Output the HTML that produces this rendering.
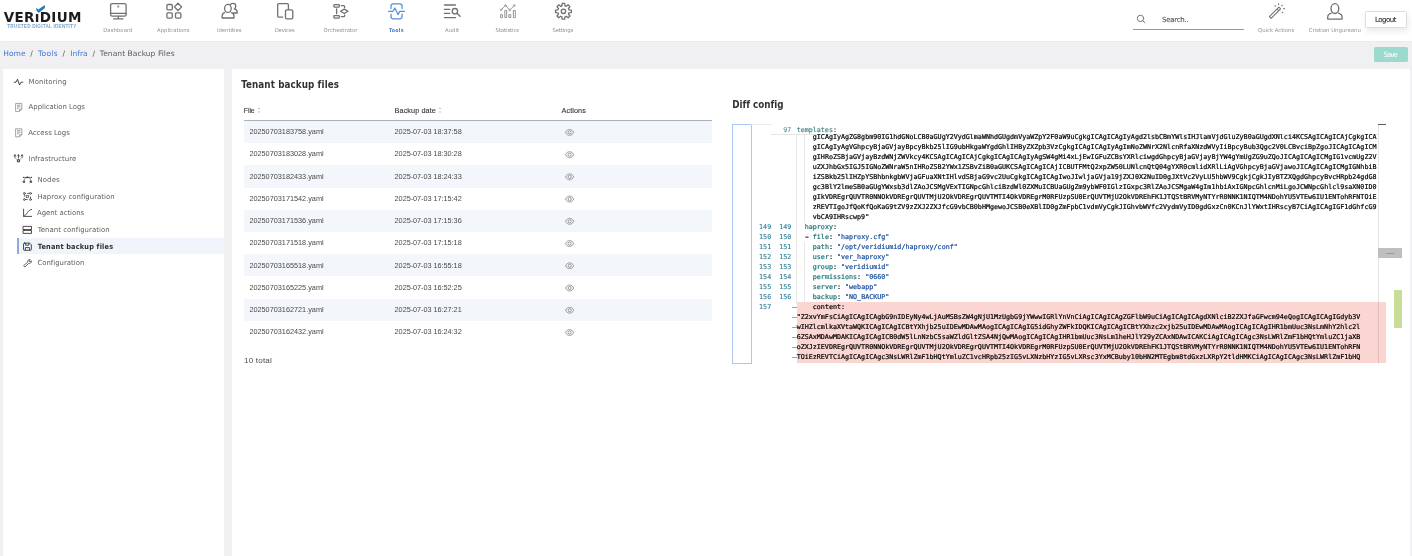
<!DOCTYPE html><html lang="en"><head><meta charset="utf-8"><title>Tenant Backup Files</title><style>
html,body{margin:0;padding:0}
body{width:1412px;height:556px;overflow:hidden;background:#f0f0f2;position:relative;font-family:"DejaVu Sans","Liberation Sans",sans-serif}
#app{position:absolute;left:0;top:0;width:1412px;height:556px;will-change:transform;overflow:hidden}
.t{position:absolute;white-space:pre}
.b{position:absolute}
#hdr{position:absolute;left:0;top:0;width:1412px;height:40.8px;background:#fff;box-shadow:0 0 1.5px rgba(0,0,0,.08)}
.panel{position:absolute;background:#fff}
.row{position:absolute;left:244px;width:467.9px;height:22.2px;background:#f3f7fb}
.m{font:6.69px/10px "DejaVu Sans Mono","Liberation Mono",monospace;white-space:pre;position:absolute;color:#000;-webkit-text-stroke:.2px currentColor}
.ln{font:6.69px/10px "DejaVu Sans Mono","Liberation Mono",monospace;white-space:pre;position:absolute;color:#237893;text-align:right;width:20px;-webkit-text-stroke:.08px currentColor}
.k{color:#1a7474}.s{color:#174c9c}.d{display:inline-block;transform:scaleX(1.7)}
svg{position:absolute;left:0;top:0;overflow:visible}
</style></head><body><div id="app">
<div id="hdr"></div>
<header>
<div class="t" style="left:3.70px;top:3.00px;font:bold 13.5px/28px 'DejaVu Sans', 'Liberation Sans', sans-serif;color:#1b1b20;letter-spacing:0.339px;">VERıDIUM</div>
<div class="t" style="left:7.20px;top:21.50px;font:bold 4.7px/10px 'Liberation Sans', sans-serif;color:#7da2cf;letter-spacing:0.203px;">TRUSTED DIGITAL IDENTITY</div>
<div class="t" style="left:103.20px;top:25.00px;font:normal 5.3px/10px 'DejaVu Sans', 'Liberation Sans', sans-serif;color:#8f8f8f;letter-spacing:0.069px;">Dashboard</div>
<div class="t" style="left:157.10px;top:25.00px;font:normal 5.3px/10px 'DejaVu Sans', 'Liberation Sans', sans-serif;color:#8f8f8f;letter-spacing:-0.005px;">Applications</div>
<div class="t" style="left:216.90px;top:25.00px;font:normal 5.3px/10px 'DejaVu Sans', 'Liberation Sans', sans-serif;color:#8f8f8f;letter-spacing:-0.006px;">Identities</div>
<div class="t" style="left:274.70px;top:25.00px;font:normal 5.3px/10px 'DejaVu Sans', 'Liberation Sans', sans-serif;color:#8f8f8f;letter-spacing:-0.146px;">Devices</div>
<div class="t" style="left:323.60px;top:25.00px;font:normal 5.3px/10px 'DejaVu Sans', 'Liberation Sans', sans-serif;color:#8f8f8f;letter-spacing:0.035px;">Orchestrator</div>
<div class="t" style="left:388.90px;top:25.00px;font:bold 5.3px/10px 'DejaVu Sans Condensed', 'Liberation Sans', sans-serif;color:#4a7bd0;letter-spacing:0.280px;">Tools</div>
<div class="t" style="left:445.00px;top:25.00px;font:normal 5.3px/10px 'DejaVu Sans', 'Liberation Sans', sans-serif;color:#8f8f8f;letter-spacing:0.023px;">Audit</div>
<div class="t" style="left:495.60px;top:25.00px;font:normal 5.3px/10px 'DejaVu Sans', 'Liberation Sans', sans-serif;color:#8f8f8f;letter-spacing:-0.080px;">Statistics</div>
<div class="t" style="left:552.50px;top:25.00px;font:normal 5.3px/10px 'DejaVu Sans', 'Liberation Sans', sans-serif;color:#8f8f8f;letter-spacing:-0.133px;">Settings</div>
<div class="t" style="left:1162.10px;top:13.00px;font:normal 7.0px/14px 'DejaVu Sans', 'Liberation Sans', sans-serif;color:#555;letter-spacing:-0.271px;-webkit-text-stroke:.12px #555;">Search..</div>
<div class="b" style="left:1133px;top:28.9px;width:111px;height:.9px;background:#9a9a9a"></div>
<div class="t" style="left:1258.00px;top:25.00px;font:normal 5.3px/10px 'DejaVu Sans', 'Liberation Sans', sans-serif;color:#8f8f8f;letter-spacing:0.015px;">Quick Actions</div>
<div class="t" style="left:1308.80px;top:25.00px;font:normal 5.3px/10px 'DejaVu Sans', 'Liberation Sans', sans-serif;color:#8f8f8f;letter-spacing:0.048px;">Cristian Ungureanu</div>
<div class="b" style="left:1365.3px;top:11.2px;width:39.9px;height:14.4px;border:.7px solid #dedede;border-radius:1.6px;background:#fff;box-shadow:1px 3px 6px rgba(0,0,0,.09)"></div>
<div class="t" style="left:1375.10px;top:13.00px;font:normal 7.0px/14px 'DejaVu Sans', 'Liberation Sans', sans-serif;color:#2e2e2e;letter-spacing:-0.554px;-webkit-text-stroke:.1px #2e2e2e;">Logout</div>
</header>
<nav aria-label="breadcrumb">
<div class="t" style="left:3.30px;top:45.50px;font:normal 7.55px/16px 'DejaVu Sans', 'Liberation Sans', sans-serif;color:#4175d9;letter-spacing:0.001px;">Home</div>
<div class="t" style="left:30.30px;top:45.50px;font:normal 7.55px/16px 'DejaVu Sans', 'Liberation Sans', sans-serif;color:#555;letter-spacing:0.000px;">/</div>
<div class="t" style="left:37.90px;top:45.50px;font:normal 7.55px/16px 'DejaVu Sans', 'Liberation Sans', sans-serif;color:#4175d9;letter-spacing:0.302px;">Tools</div>
<div class="t" style="left:62.50px;top:45.50px;font:normal 7.55px/16px 'DejaVu Sans', 'Liberation Sans', sans-serif;color:#555;letter-spacing:0.000px;">/</div>
<div class="t" style="left:70.20px;top:45.50px;font:normal 7.55px/16px 'DejaVu Sans', 'Liberation Sans', sans-serif;color:#4175d9;letter-spacing:0.023px;">Infra</div>
<div class="t" style="left:92.50px;top:45.50px;font:normal 7.55px/16px 'DejaVu Sans', 'Liberation Sans', sans-serif;color:#555;letter-spacing:0.000px;">/</div>
<div class="t" style="left:99.80px;top:45.50px;font:normal 7.55px/16px 'DejaVu Sans', 'Liberation Sans', sans-serif;color:#5a5a5a;letter-spacing:0.036px;">Tenant Backup Files</div>
<div class="b" style="left:1373.9px;top:47.2px;width:34.2px;height:14.5px;background:#9cdad0;border-radius:1.6px"></div>
<div class="t" style="left:1383.50px;top:47.50px;font:normal 7.2px/14px 'DejaVu Sans', 'Liberation Sans', sans-serif;color:#fff;letter-spacing:-1.152px;">Save</div>
</nav>
<aside>
<div class="panel" style="left:3px;top:68.6px;width:220.8px;height:490px"></div>
<div class="b" style="left:17px;top:237.7px;width:206.8px;height:16.4px;background:#f0f5fb"></div>
<div class="b" style="left:17px;top:237.7px;width:1.9px;height:16.4px;background:#8eabde"></div>
<div class="t" style="left:28.60px;top:75.00px;font:normal 6.95px/14px 'DejaVu Sans', 'Liberation Sans', sans-serif;color:#5e5e5e;letter-spacing:0.099px;">Monitoring</div>
<div class="t" style="left:28.60px;top:100.00px;font:normal 6.95px/14px 'DejaVu Sans', 'Liberation Sans', sans-serif;color:#5e5e5e;letter-spacing:-0.039px;">Application Logs</div>
<div class="t" style="left:28.20px;top:126.00px;font:normal 6.95px/14px 'DejaVu Sans', 'Liberation Sans', sans-serif;color:#5e5e5e;letter-spacing:-0.037px;">Access Logs</div>
<div class="t" style="left:28.60px;top:152.00px;font:normal 6.95px/14px 'DejaVu Sans', 'Liberation Sans', sans-serif;color:#5e5e5e;letter-spacing:0.009px;">Infrastructure</div>
<div class="t" style="left:37.40px;top:173.00px;font:normal 6.95px/14px 'DejaVu Sans', 'Liberation Sans', sans-serif;color:#5e5e5e;letter-spacing:0.141px;">Nodes</div>
<div class="t" style="left:37.40px;top:190.00px;font:normal 6.95px/14px 'DejaVu Sans', 'Liberation Sans', sans-serif;color:#5e5e5e;letter-spacing:0.008px;">Haproxy configuration</div>
<div class="t" style="left:37.00px;top:206.00px;font:normal 6.95px/14px 'DejaVu Sans', 'Liberation Sans', sans-serif;color:#5e5e5e;letter-spacing:-0.052px;">Agent actions</div>
<div class="t" style="left:37.70px;top:223.00px;font:normal 6.95px/14px 'DejaVu Sans', 'Liberation Sans', sans-serif;color:#5e5e5e;letter-spacing:0.030px;">Tenant configuration</div>
<div class="t" style="left:37.70px;top:239.50px;font:bold 7.25px/14px 'DejaVu Sans Condensed', 'Liberation Sans', sans-serif;color:#303030;letter-spacing:0.220px;">Tenant backup files</div>
<div class="t" style="left:37.40px;top:256.00px;font:normal 6.95px/14px 'DejaVu Sans', 'Liberation Sans', sans-serif;color:#5e5e5e;letter-spacing:-0.005px;">Configuration</div>
</aside>
<main><section>
<div class="panel" style="left:231.7px;top:68.6px;width:1178.7px;height:490px"></div>
<div class="t" style="left:241.20px;top:74.50px;font:bold 9.75px/20px 'DejaVu Sans Condensed', 'Liberation Sans', sans-serif;color:#333;letter-spacing:0.095px;">Tenant backup files</div>
<div class="t" style="left:243.80px;top:103.50px;font:normal 6.9px/14px 'Liberation Sans', sans-serif;color:#333;letter-spacing:-0.070px;-webkit-text-stroke:.1px #333;">File</div>
<div class="t" style="left:394.60px;top:103.50px;font:normal 7.3px/14px 'Liberation Sans', sans-serif;color:#333;letter-spacing:0.062px;-webkit-text-stroke:.1px #333;">Backup date</div>
<div class="t" style="left:561.60px;top:103.50px;font:normal 7.3px/14px 'Liberation Sans', sans-serif;color:#333;letter-spacing:0.044px;-webkit-text-stroke:.1px #333;">Actions</div>
<div class="b" style="left:244px;top:120px;width:467.9px;height:1px;background:#a9b0bb"></div>
<div class="row" style="top:121.00px"></div>
<div class="t" style="left:249.40px;top:124.50px;font:normal 7.3px/14px 'Liberation Sans', sans-serif;color:#4a4a4a;letter-spacing:-0.003px;">20250703183758.yaml</div>
<div class="t" style="left:394.60px;top:124.50px;font:normal 7.3px/14px 'Liberation Sans', sans-serif;color:#4a4a4a;letter-spacing:-0.037px;">2025-07-03 18:37:58</div>
<div class="t" style="left:249.40px;top:146.50px;font:normal 7.3px/14px 'Liberation Sans', sans-serif;color:#4a4a4a;letter-spacing:-0.003px;">20250703183028.yaml</div>
<div class="t" style="left:394.60px;top:146.50px;font:normal 7.3px/14px 'Liberation Sans', sans-serif;color:#4a4a4a;letter-spacing:-0.037px;">2025-07-03 18:30:28</div>
<div class="row" style="top:165.40px"></div>
<div class="t" style="left:249.40px;top:169.50px;font:normal 7.3px/14px 'Liberation Sans', sans-serif;color:#4a4a4a;letter-spacing:-0.003px;">20250703182433.yaml</div>
<div class="t" style="left:394.60px;top:169.50px;font:normal 7.3px/14px 'Liberation Sans', sans-serif;color:#4a4a4a;letter-spacing:-0.037px;">2025-07-03 18:24:33</div>
<div class="t" style="left:249.40px;top:191.50px;font:normal 7.3px/14px 'Liberation Sans', sans-serif;color:#4a4a4a;letter-spacing:-0.003px;">20250703171542.yaml</div>
<div class="t" style="left:394.60px;top:191.50px;font:normal 7.3px/14px 'Liberation Sans', sans-serif;color:#4a4a4a;letter-spacing:-0.037px;">2025-07-03 17:15:42</div>
<div class="row" style="top:209.80px"></div>
<div class="t" style="left:249.40px;top:213.50px;font:normal 7.3px/14px 'Liberation Sans', sans-serif;color:#4a4a4a;letter-spacing:-0.003px;">20250703171536.yaml</div>
<div class="t" style="left:394.60px;top:213.50px;font:normal 7.3px/14px 'Liberation Sans', sans-serif;color:#4a4a4a;letter-spacing:-0.037px;">2025-07-03 17:15:36</div>
<div class="t" style="left:249.40px;top:235.50px;font:normal 7.3px/14px 'Liberation Sans', sans-serif;color:#4a4a4a;letter-spacing:-0.003px;">20250703171518.yaml</div>
<div class="t" style="left:394.60px;top:235.50px;font:normal 7.3px/14px 'Liberation Sans', sans-serif;color:#4a4a4a;letter-spacing:-0.037px;">2025-07-03 17:15:18</div>
<div class="row" style="top:254.20px"></div>
<div class="t" style="left:249.40px;top:258.50px;font:normal 7.3px/14px 'Liberation Sans', sans-serif;color:#4a4a4a;letter-spacing:-0.003px;">20250703165518.yaml</div>
<div class="t" style="left:394.60px;top:258.50px;font:normal 7.3px/14px 'Liberation Sans', sans-serif;color:#4a4a4a;letter-spacing:-0.037px;">2025-07-03 16:55:18</div>
<div class="t" style="left:249.40px;top:280.50px;font:normal 7.3px/14px 'Liberation Sans', sans-serif;color:#4a4a4a;letter-spacing:-0.003px;">20250703165225.yaml</div>
<div class="t" style="left:394.60px;top:280.50px;font:normal 7.3px/14px 'Liberation Sans', sans-serif;color:#4a4a4a;letter-spacing:-0.037px;">2025-07-03 16:52:25</div>
<div class="row" style="top:298.60px"></div>
<div class="t" style="left:249.40px;top:302.50px;font:normal 7.3px/14px 'Liberation Sans', sans-serif;color:#4a4a4a;letter-spacing:-0.003px;">20250703162721.yaml</div>
<div class="t" style="left:394.60px;top:302.50px;font:normal 7.3px/14px 'Liberation Sans', sans-serif;color:#4a4a4a;letter-spacing:-0.037px;">2025-07-03 16:27:21</div>
<div class="t" style="left:249.40px;top:324.50px;font:normal 7.3px/14px 'Liberation Sans', sans-serif;color:#4a4a4a;letter-spacing:-0.003px;">20250703162432.yaml</div>
<div class="t" style="left:394.60px;top:324.50px;font:normal 7.3px/14px 'Liberation Sans', sans-serif;color:#4a4a4a;letter-spacing:-0.037px;">2025-07-03 16:24:32</div>
<div class="t" style="left:244.10px;top:352.50px;font:normal 8.1px/16px 'Liberation Sans', sans-serif;color:#4a4a4a;letter-spacing:0.163px;">10 total</div>
</section><section>
<div class="t" style="left:732.20px;top:94.50px;font:bold 9.75px/20px 'DejaVu Sans Condensed', 'Liberation Sans', sans-serif;color:#333;letter-spacing:-0.030px;">Diff config</div>
<div class="b" style="left:731.5px;top:124.3px;width:18.5px;height:238.1px;border:.9px solid #adc6ef"></div>
<div class="b" style="left:771.3px;top:134.1px;width:607px;height:.9px;background:#e6e6e6"></div>
<div class="b" style="left:751px;top:134.3px;width:661px;height:240px;overflow:hidden">
<div class="m" style="left:61.80px;top:-2.10px">gICAgIyAgZG8gbm90IG1hdGNoLCB0aGUgY2VydGlmaWNhdGUgdmVyaWZpY2F0aW9uCgkgICAgICAgIyAgd2lsbCBmYWlsIHJlamVjdGluZyB0aGUgdXNlci4KCSAgICAgICAjCgkgICA</div>
<div class="m" style="left:61.80px;top:7.90px">gICAgIyAgVGhpcyBjaGVjayBpcyBkb25lIG9ubHkgaWYgdGhlIHByZXZpb3VzCgkgICAgICAgIyAgImNoZWNrX2NlcnRfaXNzdWVyIiBpcyBub3Qgc2V0LCBvciBpZgoJICAgICAgICM</div>
<div class="m" style="left:61.80px;top:17.90px">gIHRoZSBjaGVjayBzdWNjZWVkcy4KCSAgICAgICAjCgkgICAgICAgIyAgSW4gMi4xLjEwIGFuZCBsYXRlciwgdGhpcyBjaGVjayBjYW4gYmUgZG9uZQoJICAgICAgICMgIG1vcmUgZ2V</div>
<div class="m" style="left:61.80px;top:27.90px">uZXJhbGx5IGJ5IGNoZWNraW5nIHRoZSB2YWx1ZSBvZiB0aGUKCSAgICAgICAjICBUTFMtQ2xpZW50LUNlcnQtQ04gYXR0cmlidXRlLiAgVGhpcyBjaGVjawoJICAgICAgICMgIGNhbiB</div>
<div class="m" style="left:61.80px;top:37.90px">iZSBkb25lIHZpYSBhbnkgbWVjaGFuaXNtIHlvdSBjaG9vc2UuCgkgICAgICAgIwoJIwljaGVja19jZXJ0X2NuID0gJXtVc2VyLU5hbWV9CgkjCgkJIyBTZXQgdGhpcyBvcHRpb24gdG8</div>
<div class="m" style="left:61.80px;top:47.90px">gc3BlY2lmeSB0aGUgYWxsb3dlZAoJCSMgVExTIGNpcGhlciBzdWl0ZXMuICBUaGUgZm9ybWF0IGlzIGxpc3RlZAoJCSMgaW4gIm1hbiAxIGNpcGhlcnMiLgoJCWNpcGhlcl9saXN0ID0</div>
<div class="m" style="left:61.80px;top:57.90px">gIkVDREgrQUVTR0NNOkVDREgrQUVTMjU2OkVDREgrQUVTMTI4OkVDREgrM0RFUzpSU0ErQUVTMjU2OkVDREhFK1JTQStBRVMyNTYrR0NNK1NIQTM4NDohYU5VTEw6IU1ENTohRFNTOiE</div>
<div class="m" style="left:61.80px;top:67.90px">zREVTIgoJfQoKfQoKaG9tZV9zZXJ2ZXJfcG9vbCB0bHMgewoJCSB0eXBlID0gZmFpbC1vdmVyCgkJIGhvbWVfc2VydmVyID0gdGxzCn0KCnJlYWxtIHRscyB7CiAgICAgIGF1dGhfcG9</div>
<div class="m" style="left:61.80px;top:77.90px">vbCA9IHRscwp9&quot;</div>
</div>
<div class="ln" style="left:771.4px;top:125.00px;color:#5d8ea8">97</div>
<div class="m" style="left:796.70px;top:125.00px"><span style="color:#4c8a8a">templates</span><span style="color:#444">:</span></div>
<div class="b" style="left:751px;top:124.3px;width:20.5px;height:.8px;background:#ebebeb"></div>
<div class="b" style="left:796.3px;top:135px;width:.7px;height:167.5px;background:#e9e9e9"></div>
<div class="b" style="left:804.3px;top:135px;width:.7px;height:87px;background:#e9e9e9"></div>
<div class="b" style="left:804.3px;top:242.2px;width:.7px;height:60.3px;background:#e9e9e9"></div>
<div class="ln" style="left:751.2px;top:222.20px">149</div>
<div class="ln" style="left:771.4px;top:222.20px">149</div>
<div class="m" style="left:804.75px;top:222.20px"><span class="k">haproxy</span>:</div>
<div class="ln" style="left:751.2px;top:232.20px">150</div>
<div class="ln" style="left:771.4px;top:232.20px">150</div>
<div class="m" style="left:804.75px;top:232.20px"><span class="d">-</span> <span class="k">file</span>: <span class="s">&quot;haproxy.cfg&quot;</span></div>
<div class="ln" style="left:751.2px;top:242.20px">151</div>
<div class="ln" style="left:771.4px;top:242.20px">151</div>
<div class="m" style="left:812.80px;top:242.20px"><span class="k">path</span>: <span class="s">&quot;/opt/veridiumid/haproxy/conf&quot;</span></div>
<div class="ln" style="left:751.2px;top:252.20px">152</div>
<div class="ln" style="left:771.4px;top:252.20px">152</div>
<div class="m" style="left:812.80px;top:252.20px"><span class="k">user</span>: <span class="s">&quot;ver_haproxy&quot;</span></div>
<div class="ln" style="left:751.2px;top:262.20px">153</div>
<div class="ln" style="left:771.4px;top:262.20px">153</div>
<div class="m" style="left:812.80px;top:262.20px"><span class="k">group</span>: <span class="s">&quot;veridiumid&quot;</span></div>
<div class="ln" style="left:751.2px;top:272.20px">154</div>
<div class="ln" style="left:771.4px;top:272.20px">154</div>
<div class="m" style="left:812.80px;top:272.20px"><span class="k">permissions</span>: <span class="s">&quot;0660&quot;</span></div>
<div class="ln" style="left:751.2px;top:282.20px">155</div>
<div class="ln" style="left:771.4px;top:282.20px">155</div>
<div class="m" style="left:812.80px;top:282.20px"><span class="k">server</span>: <span class="s">&quot;webapp&quot;</span></div>
<div class="ln" style="left:751.2px;top:292.20px">156</div>
<div class="ln" style="left:771.4px;top:292.20px">156</div>
<div class="m" style="left:812.80px;top:292.20px"><span class="k">backup</span>: <span class="s">&quot;NO_BACKUP&quot;</span></div>
<div class="b" style="left:796.9px;top:302.1px;width:588.9px;height:61.4px;background:#fad5d1"></div>
<div class="ln" style="left:751.2px;top:302.20px">157</div>
<div class="m" style="left:812.80px;top:302.20px">content:</div>
<div class="m" style="left:796.70px;top:312.20px">&quot;Z2xvYmFsCiAgICAgICAgbG9nIDEyNy4wLjAuMSBsZW4gNjU1MzUgbG9jYWwwIGRlYnVnCiAgICAgICAgZGFlbW9uCiAgICAgICAgdXNlciB2ZXJfaGFwcm94eQogICAgICAgIGdyb3V</div>
<div class="m" style="left:796.70px;top:322.20px">wIHZlcmlkaXVtaWQKICAgICAgICBtYXhjb25uIDEwMDAwMAogICAgICAgIG5idGhyZWFkIDQKICAgICAgICBtYXhzc2xjb25uIDEwMDAwMAogICAgICAgIHR1bmUuc3NsLmNhY2hlc2l</div>
<div class="m" style="left:796.70px;top:332.20px">6ZSAxMDAwMDAKICAgICAgICB0dW5lLnNzbC5saWZldGltZSA4NjQwMAogICAgICAgIHR1bmUuc3NsLm1heHJlY29yZCAxNDAwICAKCiAgICAgICAgc3NsLWRlZmF1bHQtYmluZC1jaXB</div>
<div class="m" style="left:796.70px;top:342.20px">oZXJzIEVDREgrQUVTR0NNOkVDREgrQUVTMjU2OkVDREgrQUVTMTI4OkVDREgrM0RFUzpSU0ErQUVTMjU2OkVDREhFK1JTQStBRVMyNTYrR0NNK1NIQTM4NDohYU5VTEw6IU1ENTohRFN</div>
<div class="m" style="left:796.70px;top:352.20px">TOiEzREVTCiAgICAgICAgc3NsLWRlZmF1bHQtYmluZC1vcHRpb25zIG5vLXNzbHYzIG5vLXRsc3YxMCBuby10bHN2MTEgbm8tdGxzLXRpY2tldHMKCiAgICAgICAgc3NsLWRlZmF1bHQ</div>
<div class="b" style="left:791.9px;top:306.90px;width:4.9px;height:.8px;background:#a2a2a2"></div>
<div class="b" style="left:791.9px;top:316.93px;width:4.9px;height:.8px;background:#a2a2a2"></div>
<div class="b" style="left:791.9px;top:326.96px;width:4.9px;height:.8px;background:#a2a2a2"></div>
<div class="b" style="left:791.9px;top:336.99px;width:4.9px;height:.8px;background:#a2a2a2"></div>
<div class="b" style="left:791.9px;top:347.02px;width:4.9px;height:.8px;background:#a2a2a2"></div>
<div class="b" style="left:791.9px;top:357.05px;width:4.9px;height:.8px;background:#a2a2a2"></div>
<div class="b" style="left:1378px;top:125px;width:.8px;height:238.5px;background:rgba(0,0,0,.1)"></div>
<div class="b" style="left:1378.2px;top:124.1px;width:7.7px;height:1px;background:#5a5a5a"></div>
<div class="b" style="left:1378.4px;top:247.8px;width:24px;height:10.6px;background:#bfbfbf"></div>
<div class="b" style="left:1386px;top:252.7px;width:8.2px;height:1.6px;background:#c88585"></div>
<div class="b" style="left:1394.3px;top:290.4px;width:8.1px;height:37.6px;background:#c8de98"></div>
</section></main>
<svg width="1412" height="556" viewBox="0 0 1412 556"><path d="M36.1 7.6 L38.2 9.5 L44.7 5.0 L45.0 7.9 L38.7 12.9 L36.4 10.4 Z" fill="#2e7db2"/><g fill="none" stroke="#707070" stroke-width="1.30" stroke-linecap="round" stroke-linejoin="round"><rect x="110.6" y="3.6" width="15.5" height="12.5" rx="1.6"/><path d="M110.6 13.4 H126.1 M118.3 16.2 V18.4 M113.6 18.9 H122.9"/><circle cx="118.3" cy="6.5" r=".35"/><rect x="166.9" y="4.5" width="5.4" height="5.4" rx="1.1"/><rect x="166.9" y="12.8" width="5.4" height="5.4" rx="1.1"/><rect x="175.5" y="12.8" width="5.4" height="5.4" rx="1.1"/><path d="M178 3.3 L181.6 6.9 L178 10.5 L174.4 6.9 Z"/><ellipse cx="227.9" cy="8.4" rx="3.3" ry="4.0"/><path d="M224.6 12.6 C222.6 13.2 222.1 14.6 222.1 16.2 V18.0 H234.0 V16.2 C234.0 14.6 233.5 13.2 231.4 12.6"/><path d="M230.6 4.4 C231.2 3.6 232.1 3.3 233.0 3.3 C234.6 3.3 235.8 4.6 235.8 6.1 C235.8 7.4 235.2 8.3 234.4 8.8 C236.4 9.4 237.2 10.6 237.2 12.0 V13.0 H233.2"/><path d="M282.6 17.2 H278.9 Q277.7 17.2 277.7 16.0 V4.8 Q277.7 3.6 278.9 3.6 H287.2 Q288.4 3.6 288.4 4.8 V9.3"/><rect x="285.5" y="9.9" width="7.3" height="9.0" rx="1.3"/><rect x="333.9" y="4.7" width="5.4" height="2.4" rx=".5"/><rect x="333.9" y="15.7" width="5.4" height="2.4" rx=".5"/><path d="M336.6 9.0 V13.7 M341.3 5.6 H343.6 Q344.6 5.6 344.6 6.6 V7.6 M341.3 16.7 H343.6 Q344.6 16.7 344.6 15.7 V15.1 M340.6 11.3 L344.3 9.1 L348.0 11.3 L344.3 13.5 Z"/><path d="M444.4 5.0 H455.5 M444.4 9.3 H449.8 M444.4 13.4 H449.8 M444.4 17.6 H455.5 M457.0 13.3 L460.1 16.3"/><circle cx="454.9" cy="11.2" r="2.7"/><path d="M561.93 5.81 L562.18 3.40 L564.72 3.40 L564.97 5.81 L566.26 6.34 L568.13 4.81 L569.94 6.62 L568.41 8.49 L568.94 9.78 L571.35 10.03 L571.35 12.57 L568.94 12.82 L568.41 14.11 L569.94 15.98 L568.13 17.79 L566.26 16.26 L564.97 16.79 L564.72 19.20 L562.18 19.20 L561.93 16.79 L560.64 16.26 L558.77 17.79 L556.96 15.98 L558.49 14.11 L557.96 12.82 L555.55 12.57 L555.55 10.03 L557.96 9.78 L558.49 8.49 L556.96 6.62 L558.77 4.81 L560.64 6.34 Z"/><circle cx="563.45" cy="11.30" r="2.2"/></g><g fill="none" stroke="#8a8a8a" stroke-width=".9" stroke-linejoin="round"><rect x="500.5" y="14.6" width="1.9" height="3.0"/><rect x="504.8" y="10.5" width="1.9" height="7.1"/><rect x="508.9" y="14.6" width="1.9" height="3.0"/><rect x="513.4" y="10.5" width="1.9" height="7.1"/><path d="M501.8 9.2 L504.9 6.0 M506.1 6.0 L509.3 9.6 M510.4 9.5 L513.8 6.0"/><circle cx="501.2" cy="9.7" r=".8"/><circle cx="505.5" cy="5.4" r=".8"/><circle cx="509.8" cy="10.1" r=".8"/><circle cx="514.4" cy="5.4" r=".8"/></g><g fill="none" stroke="#5a8fd8" stroke-width="1.25" stroke-linecap="round" stroke-linejoin="round"><path d="M391.0 8.6 V6.0 Q391.0 3.8 393.2 3.8 H399.9 Q402.1 3.8 402.1 6.0 V8.6 M391.0 14.0 V16.6 Q391.0 18.8 393.2 18.8 H399.9 Q402.1 18.8 402.1 16.6 V14.0"/><path d="M388.6 11.3 H393.0 L394.9 8.0 L398.0 14.6 L399.8 11.3 H404.4"/></g><g fill="none" stroke="#777" stroke-width="1" stroke-linecap="round"><circle cx="1140.5" cy="18.4" r="3.2"/><path d="M1142.9 20.8 L1144.9 22.8"/></g><g fill="none" stroke="#707070" stroke-width="1.05" stroke-linejoin="round" stroke-linecap="round"><path d="M1269.4 16.6 L1278.9 7.1 L1280.6 8.8 L1271.1 18.3 Z M1277.0 9.0 L1278.7 10.7"/><path d="M1275.0 5.6 L1275.6 6.2 M1278.6 3.6 V4.4 M1282.3 5.2 L1281.7 5.8 M1283.6 8.6 H1284.4 M1282.2 12.2 L1282.8 12.8"/></g><g fill="none" stroke="#707070" stroke-width="1.30" stroke-linejoin="round"><ellipse cx="1334.9" cy="8.6" rx="3.9" ry="4.9"/><path d="M1331.6 13.2 C1329.0 13.9 1327.7 15.4 1327.7 17.2 V19.1 H1342.1 V17.2 C1342.1 15.4 1340.8 13.9 1338.2 13.2"/></g><g fill="none" stroke="#3a3a3a" stroke-width=".95" stroke-linecap="round" stroke-linejoin="round"><path d="M14.3 82.2 H16.0 L17.5 79.2 L19.5 85.0 L21.0 82.2 H22.8"/><circle cx="18.5" cy="160.8" r="1.2" stroke-width="1.05"/><path d="M18.5 157.6 V155.0 M14.9 155.0 V157.4 M22.1 155.0 V157.4" stroke-width=".85"/><path d="M18.5 157.6 V159.4 M14.9 157.2 Q15.0 158.6 17.3 159.9 M22.1 157.2 Q22.0 158.6 19.7 159.9" stroke-width=".55" stroke="#777"/><path d="M14.0 155.9 L14.9 154.6 L15.8 155.9 M17.6 155.9 L18.5 154.6 L19.4 155.9 M21.2 155.9 L22.1 154.6 L23.0 155.9" stroke-width=".7"/></g><g fill="none" stroke="#8e8e8e" stroke-width=".8" stroke-linejoin="round"><path d="M15.6 103.4 H21.8 V109.2 L19.6 111.4 H15.6 Z M19.6 111.4 V109.2 H21.8"/><path d="M17.0 105.2 H20.4 M17.0 106.8 H20.4 M17.0 108.4 H18.6" stroke-width=".7" stroke="#7a7a7a"/></g><g fill="none" stroke="#8e8e8e" stroke-width=".8" stroke-linejoin="round"><path d="M15.6 128.8 H21.8 V134.6 L19.6 136.8 H15.6 Z M19.6 136.8 V134.6 H21.8"/><path d="M17.0 130.6 H20.4 M17.0 132.2 H20.4 M17.0 133.8 H18.6" stroke-width=".7" stroke="#7a7a7a"/></g><g fill="none" stroke="#3a3a3a" stroke-width=".9" stroke-linecap="round" stroke-linejoin="round"><g stroke-width=".65"><path d="M23.6 177.4 H31.4 M27.0 177.4 C25.0 177.6 24.1 178.8 24.05 181.0 M28.0 177.4 C30.0 177.6 30.9 178.8 30.95 181.0"/><rect x="23.3" y="181.0" width="1.5" height="1.6" fill="#3a3a3a" stroke-width=".4"/><rect x="30.2" y="181.0" width="1.5" height="1.6" fill="#3a3a3a" stroke-width=".4"/><rect x="26.9" y="176.8" width="1.2" height="1.2" fill="#3a3a3a" stroke-width=".3"/><rect x="23.0" y="176.9" width="1" height="1" fill="#3a3a3a" stroke="none"/><rect x="31.0" y="176.9" width="1" height="1" fill="#3a3a3a" stroke="none"/></g><g stroke-width=".75"><circle cx="24.4" cy="193.4" r=".95"/><circle cx="30.5" cy="193.4" r=".95"/><circle cx="24.4" cy="199.5" r=".95"/><circle cx="30.5" cy="199.5" r=".95"/><rect x="26.5" y="195.4" width="2" height="2"/><path d="M27.6 193.4 H29.5 M24.4 194.5 V196.2 M25.5 199.5 H27.3 M30.5 196.8 V198.4"/></g><path d="M23.6 209.2 V216.4 H31.7 M23.8 216.2 C27.5 214.8 27.0 210.4 31.6 209.4"/><path d="M23.4 226.4 H31.5 V229.6 H23.4 Z M23.4 230.4 H31.5 V233.4 H23.4 Z M24.4 229.6 V230.4 M30.5 229.6 V230.4"/><path d="M24.4 243.1 H29.6 L31.4 244.9 V249.4 Q31.4 250.3 30.5 250.3 H24.4 Q23.5 250.3 23.5 249.4 V244.0 Q23.5 243.1 24.4 243.1 Z M25.6 243.2 V245.2 H28.9 V243.2 M25.3 250.2 V247.6 H29.6 V250.2"/></g><g fill="none" stroke="#555" stroke-width=".85" stroke-linejoin="round"><path d="M23.6 265.6 L27.6 262.3 C27.2 260.8 28.4 259.4 30.2 259.6 L28.9 261.0 L29.9 262.0 L31.4 260.8 C31.6 262.6 30.2 263.8 28.7 263.4 L24.9 267.0 Z"/></g><path d="M257.80 108.9 L259.00 107.4 L260.20 108.9 Z M257.80 111.4 L259.00 112.9 L260.20 111.4 Z" fill="#b9b9b9"/><path d="M438.80 108.9 L440.00 107.4 L441.20 108.9 Z M438.80 111.4 L440.00 112.9 L441.20 111.4 Z" fill="#b9b9b9"/><g fill="none" stroke="#8c8c8c" stroke-width=".9"><path d="M565.5 132.40 C567.2 128.50 572.0 128.50 573.7 132.40 C572.0 136.30 567.2 136.30 565.5 132.40 Z"/><circle cx="569.6" cy="132.40" r="1.55"/></g><g fill="none" stroke="#8c8c8c" stroke-width=".9"><path d="M565.5 154.63 C567.2 150.73 572.0 150.73 573.7 154.63 C572.0 158.53 567.2 158.53 565.5 154.63 Z"/><circle cx="569.6" cy="154.63" r="1.55"/></g><g fill="none" stroke="#8c8c8c" stroke-width=".9"><path d="M565.5 176.86 C567.2 172.96 572.0 172.96 573.7 176.86 C572.0 180.76 567.2 180.76 565.5 176.86 Z"/><circle cx="569.6" cy="176.86" r="1.55"/></g><g fill="none" stroke="#8c8c8c" stroke-width=".9"><path d="M565.5 199.09 C567.2 195.19 572.0 195.19 573.7 199.09 C572.0 202.99 567.2 202.99 565.5 199.09 Z"/><circle cx="569.6" cy="199.09" r="1.55"/></g><g fill="none" stroke="#8c8c8c" stroke-width=".9"><path d="M565.5 221.32 C567.2 217.42 572.0 217.42 573.7 221.32 C572.0 225.22 567.2 225.22 565.5 221.32 Z"/><circle cx="569.6" cy="221.32" r="1.55"/></g><g fill="none" stroke="#8c8c8c" stroke-width=".9"><path d="M565.5 243.55 C567.2 239.65 572.0 239.65 573.7 243.55 C572.0 247.45 567.2 247.45 565.5 243.55 Z"/><circle cx="569.6" cy="243.55" r="1.55"/></g><g fill="none" stroke="#8c8c8c" stroke-width=".9"><path d="M565.5 265.78 C567.2 261.88 572.0 261.88 573.7 265.78 C572.0 269.68 567.2 269.68 565.5 265.78 Z"/><circle cx="569.6" cy="265.78" r="1.55"/></g><g fill="none" stroke="#8c8c8c" stroke-width=".9"><path d="M565.5 288.01 C567.2 284.11 572.0 284.11 573.7 288.01 C572.0 291.91 567.2 291.91 565.5 288.01 Z"/><circle cx="569.6" cy="288.01" r="1.55"/></g><g fill="none" stroke="#8c8c8c" stroke-width=".9"><path d="M565.5 310.24 C567.2 306.34 572.0 306.34 573.7 310.24 C572.0 314.14 567.2 314.14 565.5 310.24 Z"/><circle cx="569.6" cy="310.24" r="1.55"/></g><g fill="none" stroke="#8c8c8c" stroke-width=".9"><path d="M565.5 332.47 C567.2 328.57 572.0 328.57 573.7 332.47 C572.0 336.37 567.2 336.37 565.5 332.47 Z"/><circle cx="569.6" cy="332.47" r="1.55"/></g></svg>
</div></body></html>
